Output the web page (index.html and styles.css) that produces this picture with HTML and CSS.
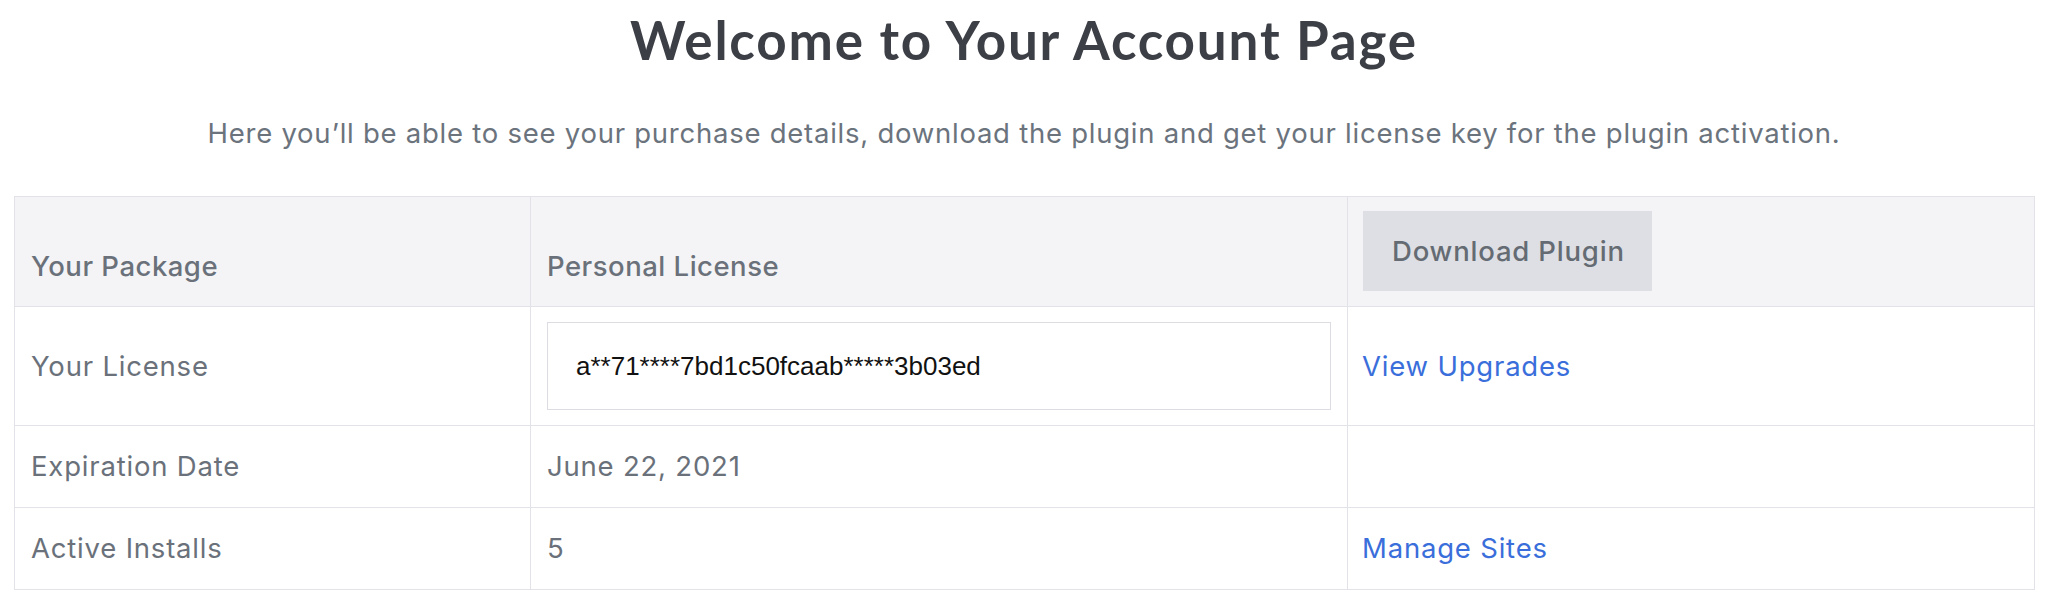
FILE: index.html
```html
<!DOCTYPE html>
<html lang="en">
<head>
<meta charset="utf-8">
<title>Your Account</title>
<link rel="stylesheet" href="styles.css">
</head>
<body>
<main class="page">
  <h1 class="title">Welcome to Your Account Page</h1>
  <p class="intro">Here you’ll be able to see your purchase details, download the plugin and get your license key for the plugin activation.</p>
  <table class="account">
    <colgroup>
      <col class="c1">
      <col class="c2">
      <col class="c3">
    </colgroup>
    <thead>
      <tr>
        <th class="head">Your Package</th>
        <th class="head">Personal License</th>
        <th class="head head-action"><a class="btn" href="#">Download Plugin</a></th>
      </tr>
    </thead>
    <tbody>
      <tr>
        <td>Your License</td>
        <td><div class="license">a**71****7bd1c50fcaab*****3b03ed</div></td>
        <td class="action"><a class="link" href="#">View Upgrades</a></td>
      </tr>
      <tr>
        <td>Expiration Date</td>
        <td>June 22, 2021</td>
        <td class="action"></td>
      </tr>
      <tr>
        <td>Active Installs</td>
        <td>5</td>
        <td class="action"><a class="link" href="#">Manage Sites</a></td>
      </tr>
    </tbody>
  </table>
</main>
</body>
</html>
```
FILE: styles.css
```css
* { box-sizing: border-box; }
html, body { margin: 0; padding: 0; background: #ffffff; }
body {
  font-family: Inter, Lato, "Liberation Sans", Arial, sans-serif;
  color: #6a717a;
}
.page {
  padding: 0 14px;
}
.title {
  margin: 8px 0 0;
  font-family: Lato, "Liberation Sans", Arial, sans-serif;
  font-size: 53px;
  line-height: 64px;
  font-weight: 700;
  letter-spacing: 1.8px;
  color: #3c3f46;
  text-align: center;
}
.intro {
  margin: 41px 0 0;
  font-size: 27.5px;
  line-height: 40px;
  letter-spacing: 0.75px;
  color: #6b737d;
  text-align: center;
}
.account {
  margin-top: 43px;
  width: 100%;
  table-layout: fixed;
  border-collapse: collapse;
  font-size: 27.5px;
  letter-spacing: 0.8px;
}
.c1 { width: 516px; }
.c2 { width: 817px; }
.c3 { width: 687px; }
.account th, .account td {
  border: 1px solid #e2e3e8;
  text-align: left;
  color: #6a717a;
}
.account td {
  padding: 15px 16px;
  line-height: 51px;
  vertical-align: middle;
  font-weight: 400;
}
.account td.action {
  padding-left: 14px;
}
.head {
  background: #f4f4f6;
  padding: 14px 16px 15px;
  line-height: 50px;
  vertical-align: bottom;
  font-weight: 500;
  letter-spacing: 0.5px;
}
.head-action {
  padding-left: 15px;
}
.btn {
  display: inline-block;
  width: 289px;
  height: 80px;
  line-height: 80px;
  padding-left: 29px;
  background: #dedfe4;
  color: #646b73;
  text-decoration: none;
  font-weight: 500;
  letter-spacing: 0.8px;
}
.license {
  height: 88px;
  line-height: 86px;
  border: 1px solid #dcdde2;
  padding-left: 28px;
  font-family: "Liberation Sans", Arial, sans-serif;
  font-size: 26px;
  letter-spacing: 0;
  color: #111111;
  background: #fff;
}
.link {
  color: #3a6edb;
  text-decoration: none;
}
```
